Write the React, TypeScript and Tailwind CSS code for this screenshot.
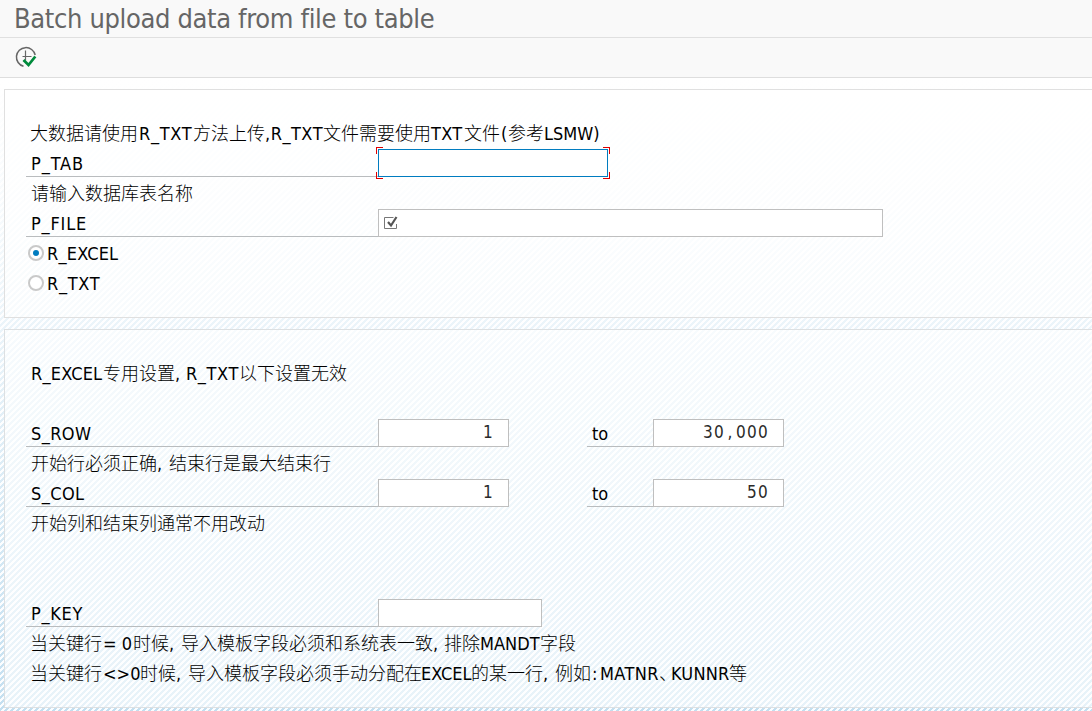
import type { ReactNode } from "react";

type Run = [text: string, width: number, spacing?: number];

function runClass(text: string) {
  if (/[\u3400-\u9fff]/.test(text)) {
    return "shrink-0 font-['Noto_Sans_CJK_SC',sans-serif] leading-[29px] font-light";
  }
  if (text === "、") {
    return "shrink-0 font-['Noto_Sans_CJK_SC',sans-serif] leading-[29px] font-light [font-feature-settings:'halt']";
  }
  return "shrink-0 leading-[31px]";
}

function Note({ items, pad = "pl-[25px]" }: { items: Run[]; pad?: string }) {
  return (
    <div className={`${pad} flex h-[30px] whitespace-pre`}>
      {items.map(([t, w, s], i) => (
        <span key={i} className={runClass(t)} style={{ width: w, letterSpacing: s }}>
          {t}
        </span>
      ))}
    </div>
  );
}

function Label({ children, w = "w-[352px]", track = "tracking-[0.4px]" }: { children: ReactNode; w?: string; track?: string }) {
  return <div className={`${w} ${track} h-[29px] shrink-0 border-b border-[#b9bcbe] pl-[5px] leading-[31px]`}>{children}</div>;
}

function Box({ value = "", w }: { value?: string; w: string }) {
  return (
    <div className={`${w} mt-px h-7 shrink-0 border border-[#bfbfbf] bg-white pr-[14px] text-right text-[17px] leading-[25px] tracking-[1.25px] text-[#2a2a2a]`}>
      {value.split(/(,)/).map((part, i) =>
        part === "," ? (
          <span key={i} className="inline-block w-[11px] text-center">
            ,
          </span>
        ) : (
          part
        ),
      )}
    </div>
  );
}

function Row({ children }: { children: ReactNode }) {
  return <div className="flex h-[30px] pl-[21px]">{children}</div>;
}

function Range({ name, from, to }: { name: string; from: string; to: string }) {
  return (
    <Row>
      <Label>{name}</Label>
      <Box value={from} w="w-[131px]" />
      <div className="w-[78px] shrink-0" />
      <Label w="w-[66px]" track="tracking-normal">
        to
      </Label>
      <Box value={to} w="w-[131px]" />
    </Row>
  );
}

function Radio({ label, track, on }: { label: string; track: string; on?: boolean }) {
  return (
    <div className="flex h-[30px] pl-[23px]">
      <span className="mt-[7px] flex size-4 items-center justify-center rounded-full border-[2.5px] border-[#c9c9c9] bg-white">
        {on && <span className="size-[6px] rounded-full bg-[#007cc0]" />}
      </span>
      <span className={`ml-[3px] leading-[31px] ${track}`}>{label}</span>
    </div>
  );
}

export default function App() {
  return (
    <div className="flex h-[711px] w-[1092px] flex-col overflow-hidden bg-white font-['DejaVu_Sans_Condensed','DejaVu_Sans',sans-serif] text-[18px] text-black [font-stretch:condensed]">
      <header className="h-[38px] shrink-0 border-b border-[#e0e0e0] bg-[#f9f9f9] pl-[14px] text-[27px] leading-[37px] tracking-[-0.35px] whitespace-nowrap text-[#666]">
        Batch upload data from file to table
      </header>
      <div className="flex h-10 shrink-0 border-b border-[#dedede] bg-[#f9f9f9] pt-[7px] pl-[12.5px]">
        <svg width="26" height="24" viewBox="0 0 26 24" fill="none">
          <path d="M22.2 10A9.5 9.5 0 1 0 10.5 21.3" stroke="#666" strokeWidth="1.5" />
          <path d="M12.5 5.5v10M9.5 11.5h9" stroke="#666" strokeWidth="1.2" />
          <path d="m10.5 15 5 5 6.8-8.5" stroke="#008a3b" strokeWidth="2.8" />
        </svg>
      </div>
      <main className="flex h-[633px] flex-col gap-[11px] bg-[linear-gradient(180deg,#fff_0%,rgba(255,255,255,0.88)_20%,rgba(255,255,255,0.55)_50%,rgba(255,255,255,0)_100%),repeating-linear-gradient(135deg,#c3dff0_0px,#c3dff0_2.12px,#fbfdff_2.12px,#fbfdff_4.243px)] pt-[11px] pl-1">
        <section className="h-[229px] shrink-0 border border-r-0 border-[#e0e0e0] bg-white/60 pt-[28px]">
          <Note items={[["大数据请使用", 109], ["R_TXT", 54, 0.7], ["方法上传", 72], [",R_TXT", 58, 0.5], ["文件需要使用", 108], ["TXT", 33, 0.3], ["文件", 37], ["(", 7], ["参考", 36], ["LSMW)", 60]]} />
          <Row>
            <Label track="tracking-[0.9px]">P_TAB</Label>
            <div className="relative mt-px h-7 w-[230px] border border-[#007cc0] bg-white">
              <span className="absolute -top-[3px] -left-[3px] size-[7px] border-t border-l border-[#e00000]" />
              <span className="absolute -top-[3px] -right-[3px] size-[7px] border-t border-r border-[#e00000]" />
              <span className="absolute -bottom-[3px] -left-[3px] size-[7px] border-b border-l border-[#e00000]" />
              <span className="absolute -right-[3px] -bottom-[3px] size-[7px] border-r border-b border-[#e00000]" />
            </div>
          </Row>
          <Note pad="pl-[26px]" items={[["请输入数据库表名称", 162]]} />
          <Row>
            <Label track="tracking-[0.8px]">P_FILE</Label>
            <div className="mt-px h-7 w-[505px] border border-[#bfbfbf] bg-white pt-[6px] pl-[5px]">
              <svg width="14" height="14" viewBox="0 0 14 14" fill="none">
                <path d="M12.5 8v4.5H.5v-11h9" stroke="#777" />
                <path d="m4 6 3 3.5L12.5 1" stroke="#555" strokeWidth="2.2" />
              </svg>
            </div>
          </Row>
          <Radio label="R_EXCEL" track="tracking-[0.2px]" on />
          <Radio label="R_TXT" track="tracking-[0.7px]" />
        </section>
        <section className="h-[379px] shrink-0 border border-r-0 border-[#dde0e2] bg-white/60 pt-[28px]">
          <Note pad="pl-[26px]" items={[["R_EXCEL", 72, 0.2], ["专用设置", 72], [", ", 11], ["R_TXT", 53, 0.6], ["以下设置无效", 108]]} />
          <div className="h-[30px]" />
          <Range name="S_ROW" from="1" to="30,000" />
          <Note pad="pl-[26px]" items={[["开始行必须正确", 126], [", ", 12], ["结束行是最大结束行", 162]]} />
          <Range name="S_COL" from="1" to="50" />
          <Note pad="pl-[26px]" items={[["开始列和结束列通常不用改动", 234]]} />
          <div className="h-[60px]" />
          <Row>
            <Label track="tracking-[0.7px]">P_KEY</Label>
            <Box w="w-[164px]" />
          </Row>
          <Note items={[["当关键行", 73], ["= 0", 30], ["时候", 36], [", ", 12], ["导入模板字段必须和系统表一致", 252], [", ", 11], ["排除", 36], ["MANDT", 60], ["字段", 36]]} />
          <Note items={[["当关键行", 73], ["<>0", 37], ["时候", 36], [", ", 12], ["导入模板字段必须手动分配在", 233], ["EXCEL", 50], ["的某一行", 72], [", ", 12], ["例如", 37], [":", 8], ["MATNR", 59, 0.4], ["、", 12], ["KUNNR", 58, 0.2], ["等", 18]]} />
        </section>
      </main>
    </div>
  );
}
